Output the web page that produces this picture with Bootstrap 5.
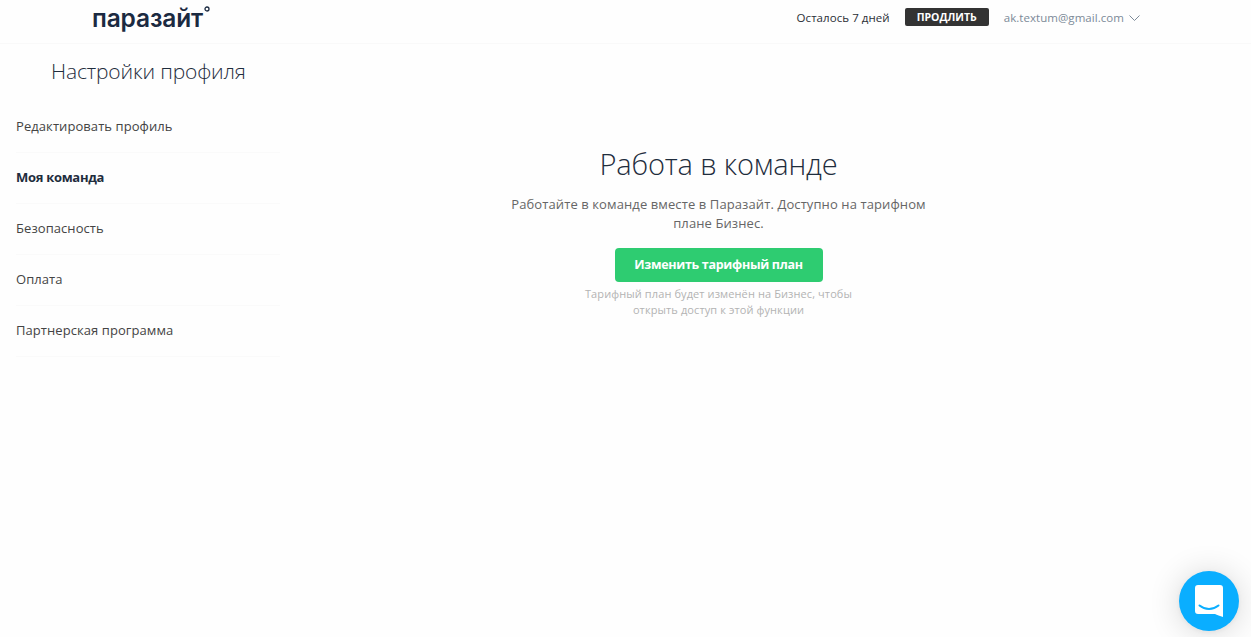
<!DOCTYPE html>
<html lang="ru">
<head>
<meta charset="utf-8">
<meta name="viewport" content="width=device-width, initial-scale=1">
<title>Настройки профиля</title>
<link href="https://cdn.jsdelivr.net/npm/bootstrap@5.3.0/dist/css/bootstrap.min.css" rel="stylesheet">
<style>
body{font-family:"Open Sans","Noto Sans",sans-serif;color:#1f2d3d;background:#fefefe;height:637px;overflow:hidden}
a{text-decoration:none;color:inherit}
.topbar{height:44px;border-bottom:1px solid #f9f9f9;padding:0 110px 8px 92px}
.brand-name{font:600 24.5px/32px "Inter",sans-serif;color:#1b2a41;letter-spacing:-.15px}
.brand-ring{width:6px;height:6px;margin:4px 0 0 1px}
.days-left{font-size:11.5px;letter-spacing:.06px;color:#2b2f36;margin-right:15px}
.btn-renew{width:84px;height:18px;background:#333;color:#fff;font-size:10.5px;font-weight:700;line-height:16px;border-radius:2px;margin:-1px 15px 0 0}
.account{font-size:11.5px;color:#7c8a98;letter-spacing:.05px}
.side{width:280px;padding-left:16px}
.side-title{font-size:21px;font-weight:350;line-height:28px;margin:13px 0 17px 35px;white-space:nowrap;letter-spacing:-.15px}
.side-item{display:block;height:51px;line-height:48px;border-bottom:1px solid #fafafa;font-size:13px;color:#444;white-space:nowrap;letter-spacing:.07px}
.side-item.current{font-weight:700;color:#1f2d3d;letter-spacing:-.3px}
.team{width:440px;margin-left:218.5px;padding-top:99px}
.team h1{font-size:29px;font-weight:300;line-height:41px;margin-bottom:11px;letter-spacing:-.15px}
.team-lead{font-size:13px;line-height:19px;color:#666;margin-bottom:15px;letter-spacing:.1px}
.btn-plan{width:208px;height:34px;background:#2ecc71;color:#fff;font-size:12.5px;font-weight:700;line-height:32px;border-radius:4px;letter-spacing:-.3px}
.team-note{font-size:11px;line-height:16px;color:#b3b3b3;margin-top:4px;letter-spacing:.1px}
.chat{right:12px;bottom:6px;width:60px;height:60px;background:#0aaeff;box-shadow:0 1px 6px rgba(0,0,0,.06),0 2px 32px rgba(0,0,0,.16)}
</style>
</head>
<body>
<header class="topbar d-flex align-items-center">
  <a href="#" class="d-flex align-items-start me-auto"><span class="brand-name">паразайт</span><svg class="brand-ring" viewBox="0 0 6 6"><circle cx="3" cy="3" r="2" fill="none" stroke="#1b2a41" stroke-width="1.3"/></svg></a>
  <span class="days-left">Осталось 7 дней</span>
  <button class="btn btn-renew p-0 border-0">ПРОДЛИТЬ</button>
  <a href="#" class="account d-flex align-items-center"><span>ak.textum@gmail.com</span><svg class="ms-1" width="13" height="8" viewBox="0 0 13 8"><path d="M1.500 1.500l5 5 5-5" fill="none" stroke="#7c8a98"/></svg></a>
</header>
<main class="d-flex">
  <aside class="side">
    <h2 class="side-title">Настройки профиля</h2>
    <nav>
      <a href="#" class="side-item"><span>Редактировать профиль</span></a>
      <a href="#" class="side-item current"><span>Моя команда</span></a>
      <a href="#" class="side-item"><span>Безопасность</span></a>
      <a href="#" class="side-item"><span>Оплата</span></a>
      <a href="#" class="side-item"><span>Партнерская программа</span></a>
    </nav>
  </aside>
  <section class="team text-center">
    <h1>Работа в команде</h1>
    <p class="team-lead">Работайте в команде вместе в Паразайт. Доступно на тарифном<br>плане Бизнес.</p>
    <button class="btn btn-plan p-0 border-0">Изменить тарифный план</button>
    <p class="team-note">Тарифный план будет изменён на Бизнес, чтобы<br>открыть доступ к этой функции</p>
  </section>
</main>
<button class="chat btn p-0 border-0 rounded-circle position-fixed d-flex align-items-center justify-content-center" aria-label="Чат"><svg width="28" height="32" viewBox="0 0 28 32"><path d="M3 0h22a3 3 0 0 1 3 3v29c-3-1-6-2-8-3H3a3 3 0 0 1-3-3V3a3 3 0 0 1 3-3z" fill="#fff"/><path d="M4.500 20.500c5.500 4.500 13.500 4.500 19 0" fill="none" stroke="#0aaeff" stroke-width="2" stroke-linecap="round"/></svg></button>
<script src="https://cdn.jsdelivr.net/npm/bootstrap@5.3.0/dist/js/bootstrap.bundle.min.js"></script>
</body>
</html>
